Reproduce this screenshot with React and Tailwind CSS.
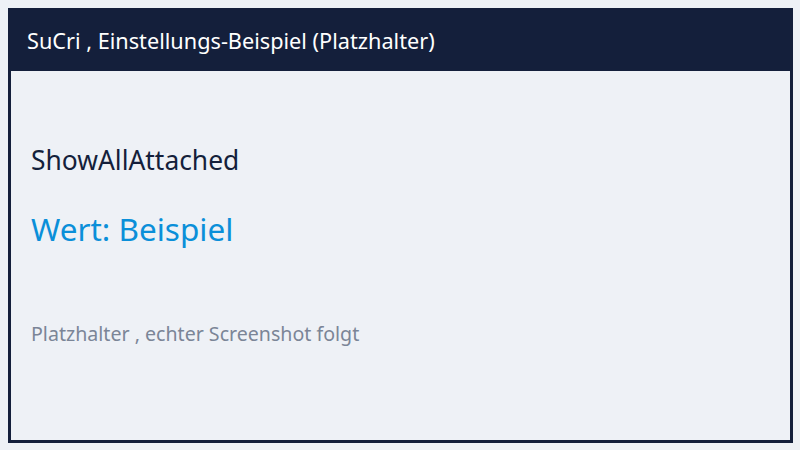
export default function App() {
  return (
    <div className="w-[800px] h-[450px] bg-[#eef1f6] p-[8px] box-border" style={{ fontFamily: '"Noto Sans", "Open Sans", sans-serif' }}>
      <div className="w-[785px] h-[435px] border-[3px] border-[#141f3b] flex flex-col bg-[#eef1f6] box-border">
        <div className="h-[60px] bg-[#141f3b] flex items-center px-[16px] text-white text-[21.7px] shrink-0">
          SuCri , Einstellungs-Beispiel (Platzhalter)
        </div>
        <div className="flex flex-col px-[20px]">
          <div className="mt-[73px] text-[26.4px] leading-[32px] text-[#141f3b]">ShowAllAttached</div>
          <div className="mt-[33px] text-[31.5px] leading-[40px] text-[#0a8fd9]">Wert: Beispiel</div>
          <div className="mt-[71px] text-[19.6px] leading-[28px] text-[#7b8597]">Platzhalter , echter Screenshot folgt</div>
        </div>
      </div>
    </div>
  );
}
